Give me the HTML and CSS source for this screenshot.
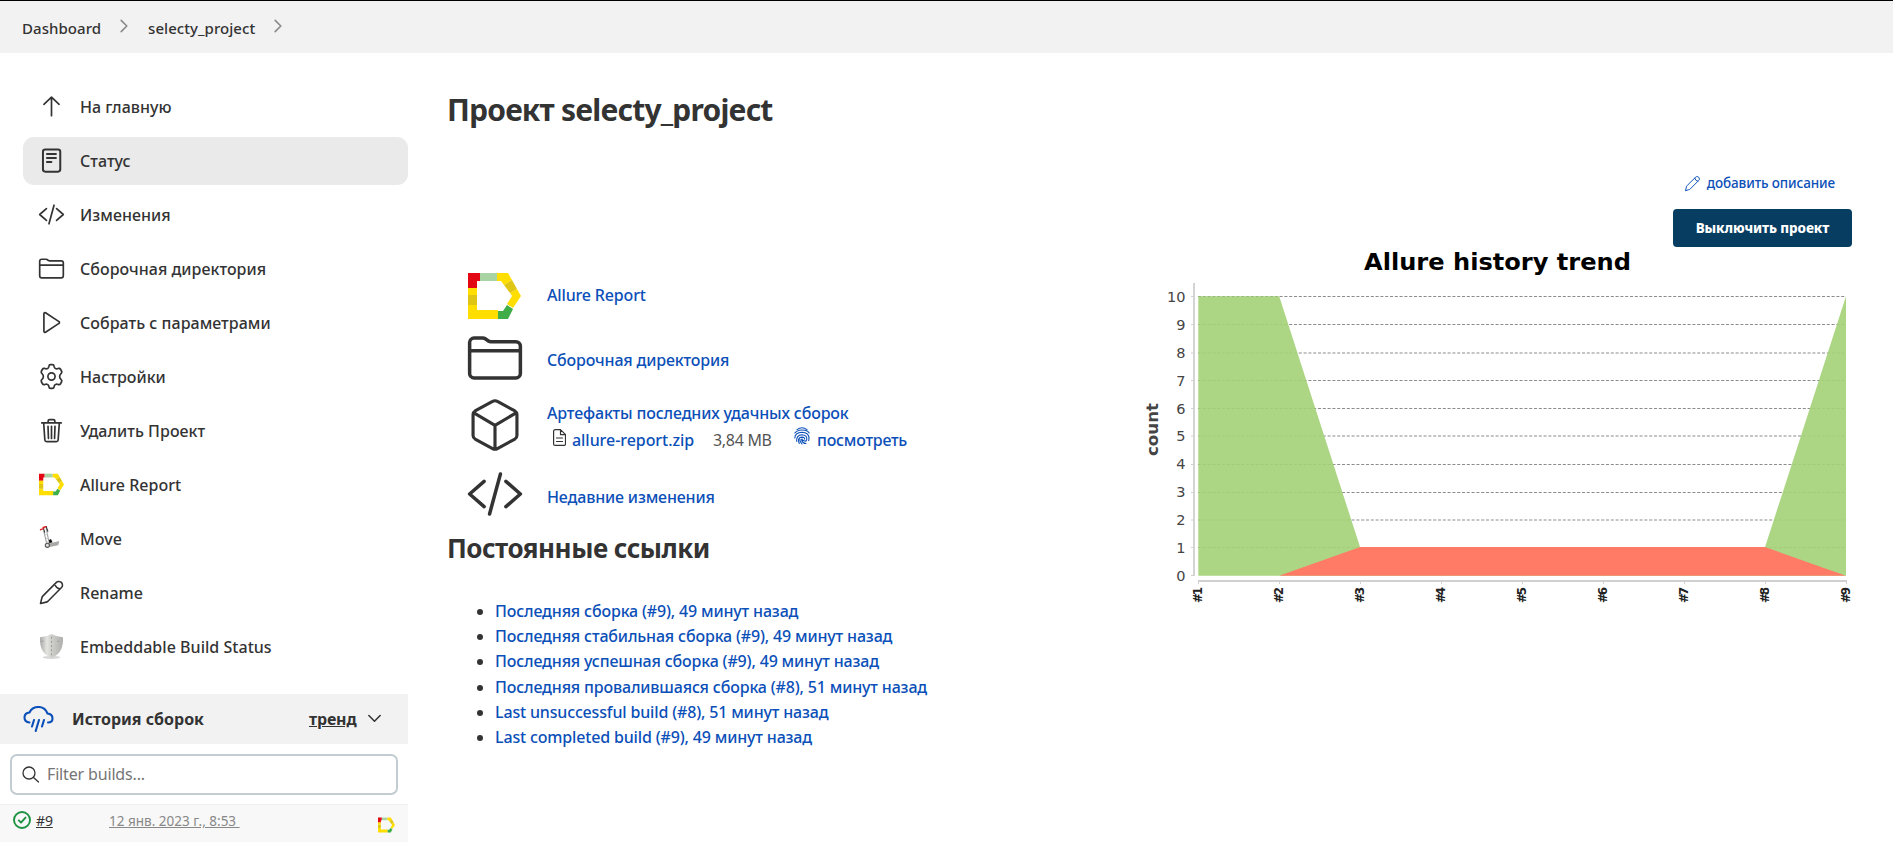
FILE: index.html
```html
<!DOCTYPE html>
<html lang="ru">
<head>
<meta charset="utf-8">
<title>selecty_project</title>
<link rel="stylesheet" href="styles.css">
</head>
<body>
<svg class="defs" width="0" height="0">
  <symbol id="up" viewBox="0 0 512 512"><path d="M112 214L256 80l144 134M256 92v338"/></symbol>
  <symbol id="doc" viewBox="0 0 512 512"><rect x="94" y="48" width="328" height="420" rx="44" stroke-width="38"/><path d="M170 134h170M170 208h170M170 284h84" stroke-width="38"/></symbol>
  <symbol id="code" viewBox="0 0 512 512"><path d="M160 368L32 256l128-112M352 368l128-112-128-112M304 80l-96 352"/></symbol>
  <symbol id="folder" viewBox="0 0 512 512"><path d="M440 432H72a40 40 0 01-40-40V120a40 40 0 0140-40h75.89a40 40 0 0122.19 6.72l27.84 18.56a40 40 0 0022.19 6.72H440a40 40 0 0140 40v240a40 40 0 01-40 40zM32 192h448"/></symbol>
  <symbol id="play" viewBox="0 0 512 512"><path d="M112 91v330c0 17 17 28 31 20l255-168c12-7 12-27 0-34L143 71c-14-8-31 3-31 20z"/></symbol>
  <symbol id="gear" viewBox="0 0 512 512"><circle cx="256" cy="256" r="68"/><path d="M207 60q4-28 30-28h38q26 0 30 28l5 20q5 17 22 25 17 9 34 4l24-7q25-5 37 17l21 37q11 22-7 40l-16 17q-14 14-14 43t14 43l16 17q18 18 7 40l-21 37q-12 22-37 17l-24-7q-17-5-34 4-17 8-22 25l-5 20q-4 28-30 28h-38q-26 0-30-28l-5-20q-5-17-22-25-17-9-34-4l-24 7q-25 5-37-17l-21-37q-11-22 7-40l16-17q14-14 14-43t-14-43l-16-17q-18-18-7-40l21-37q12-22 37-17l24 7q17 5 34-4 17-8 22-25z"/></symbol>
  <symbol id="trash" viewBox="0 0 512 512"><path d="M108 118l22 318q3 32 34 32h184q31 0 34-32l22-318M72 112h368M192 108V78q0-30 30-30h68q30 0 30 30v30M256 176v232M190 176l8 232M322 176l-8 232"/></symbol>
  <symbol id="pen" viewBox="0 0 512 512"><path transform="translate(18 18) scale(.93)" d="M32 480l28-116Q66 340 82 324L356 50q22-22 52-18 70 8 72 76 0 26-20 46L188 428q-16 18-40 24zM326 82q14 84 104 104"/></symbol>
  <symbol id="cube" viewBox="0 0 512 512"><path d="M472 360V152q0-22-20-34L280 24q-24-14-48 0L60 118q-20 12-20 34v208q0 22 20 34l172 94q24 14 48 0l172-94q20-12 20-34zM48 136l208 124 208-124M256 490V260"/></symbol>
  <symbol id="chev" viewBox="0 0 512 512"><path d="M184 112l144 144-144 144"/></symbol>
  <symbol id="allure" viewBox="0 0 53 46"><path fill="#e30613" d="M0 0h12v8H9v7H0z"/><path fill="#a8d3a3" d="M12 0h17v8H12z"/><path fill="#ffde00" d="M29 0h11l4 7-8 5-3-4h-4zM49 16l4 7-8 12-6-4 5-8-2-3zM0 15h9v7H0zM0 32h9v5h21v9H0z"/><path fill="#dfc514" d="M36 12l8-5 5 9-7 4zM0 22h9v10H0z"/><path fill="#3fae49" d="M30 38h5l4-6 6 4-5 10H30z"/></symbol>
</svg>

<header class="crumbs">
  <a class="crumb">Dashboard</a><svg class="sep"><use href="#chev"/></svg>
  <a class="crumb">selecty_project</a><svg class="sep"><use href="#chev"/></svg>
</header>

<div class="page">
  <aside class="side">
    <nav class="menu">
      <a class="item"><svg class="ico"><use href="#up"/></svg><span>На главную</span></a>
      <a class="item active"><svg class="ico"><use href="#doc"/></svg><span>Статус</span></a>
      <a class="item"><svg class="ico"><use href="#code"/></svg><span>Изменения</span></a>
      <a class="item"><svg class="ico"><use href="#folder"/></svg><span>Сборочная директория</span></a>
      <a class="item"><svg class="ico"><use href="#play"/></svg><span>Собрать с параметрами</span></a>
      <a class="item"><svg class="ico"><use href="#gear"/></svg><span>Настройки</span></a>
      <a class="item"><svg class="ico"><use href="#trash"/></svg><span>Удалить Проект</span></a>
      <a class="item"><svg class="ico plain"><use href="#allure"/></svg><span>Allure Report</span></a>
      <a class="item"><svg class="ico plain" viewBox="0 0 24 24"><g stroke-width="1"><path d="M7 2l2.800 15M4.500 4.500l3 13" stroke="#999"/><path d="M6 8.500l2.500-1M7 12l2.500-1M7.500 15.500l2.500-1" stroke="#ccc"/><path d="M1.500 3.500l3-1M4 1.500l3-1" stroke="#d22" stroke-width="1.400"/><path d="M7 1l1.500 4M4.500 3l1 3" stroke="#333"/><path d="M9 17l10.500-2.500-1 4L9 20.500z" fill="#a9a9a6"/><path d="M9.500 13.500l2-1 1.500 3-3 1z" fill="#111"/><circle cx="8" cy="18.500" r="2" fill="#ddd" stroke="#555"/></g></svg><span>Move</span></a>
      <a class="item"><svg class="ico"><use href="#pen"/></svg><span>Rename</span></a>
      <a class="item"><svg class="ico plain" viewBox="0 0 24 24"><defs><linearGradient id="sh"><stop stop-color="#a8a8a6"/><stop offset=".3" stop-color="#e4e5e1"/><stop offset=".5" stop-color="#cfcfcb"/><stop offset="1" stop-color="#aeaeab"/></linearGradient></defs><ellipse cx="12" cy="22.500" rx="8.500" ry="1.500" fill="#d8d8d8"/><path d="M12 0q5 3 11 3 1 15-11 20Q0 18 1 3 7 3 12 0z" fill="url(#sh)"/><path d="M12 3v17M3 7h3M18 7h3" stroke="#999" stroke-width="1" stroke-dasharray="1 3"/></svg><span>Embeddable Build Status</span></a>
    </nav>
    <div class="hist-head">
      <svg class="cloud" viewBox="0 0 30 26"><path d="M6 16.500Q1 16 1 11.500 1 7 6 6.500 8.500 1 15 1t9 6.500q5 .5 5 5 0 4-4.500 4"/><path d="M10.500 14l-2 6.500M15.500 14l-3.300 11M20.500 14l-2 6.500"/></svg>
      <b class="hist-title">История сборок</b>
      <a class="trend">тренд</a>
      <svg class="down" viewBox="0 0 12 8"><path d="M.8 1.200L6 6.600l5.200-5.400"/></svg>
    </div>
    <div class="search">
      <svg class="lens" viewBox="0 0 17 17"><circle cx="7" cy="7" r="6"/><path d="M11.500 11.500l5 4.500"/></svg>
      <span>Filter builds...</span>
    </div>
    <div class="build">
      <svg class="ok" viewBox="0 0 18 18"><circle cx="9" cy="9" r="8"/><path d="M5.800 9.400l2.200 2.200 4.500-5"/></svg>
      <a class="num">#9</a>
      <a class="date">12 янв. 2023 г., 8:53&nbsp;</a>
      <svg class="mini"><use href="#allure"/></svg>
    </div>
  </aside>

  <main class="main">
    <section class="info">
      <h1>Проект selecty_project</h1>
      <div class="rows">
        <div class="row r1"><svg class="big brand"><use href="#allure"/></svg><a class="t1">Allure Report</a></div>
        <div class="row r2"><svg class="big"><use href="#folder"/></svg><a class="t2">Сборочная директория</a></div>
        <div class="row r3"><svg class="big box"><use href="#cube"/></svg>
          <div class="arts">
            <a class="t3">Артефакты последних удачных сборок</a>
            <div class="file">
              <svg class="page-ico" viewBox="0 0 13 17"><path d="M2.500.6h5l5 5v9.300q0 1.500-1.500 1.500H2.100q-1.500 0-1.500-1.500V2.100Q.6.600 2.500.6zM7.500.6v5h5M3.500 9h6M3.500 12.500h6"/></svg>
              <a class="zip">allure-report.zip</a><span class="size">3,84 MB</span>
              <svg class="finger" viewBox="0 0 16 18"><path d="M3 2.600Q8-1 13 2.600M.8 6Q3 3.200 8 3t7.200 3M.8 11Q1 5.500 8 5.300q7 .2 7 6.200 0 1-.4 2M2.800 14.500Q2 8 8 7.700q5 .3 4.800 4.300-.2 3-2.800 1.800T8 12M5.300 16.500Q3 10.200 8 10.100q2.800.3 2.600 2M8 17Q5.500 14 6 12.300M12 16.500q-3.500 0-4.500-4"/></svg>
              <a class="look">посмотреть</a>
            </div>
          </div>
        </div>
        <div class="row r4"><svg class="big"><use href="#code"/></svg><a class="t4">Недавние изменения</a></div>
      </div>
      <h2>Постоянные ссылки</h2>
      <ul class="links">
        <li><a>Последняя сборка (#9), 49 минут назад</a></li>
        <li><a>Последняя стабильная сборка (#9), 49 минут назад</a></li>
        <li><a>Последняя успешная сборка (#9), 49 минут назад</a></li>
        <li><a>Последняя провалившаяся сборка (#8), 51 минут назад</a></li>
        <li><a>Last unsuccessful build (#8), 51 минут назад</a></li>
        <li><a>Last completed build (#9), 49 минут назад</a></li>
      </ul>
    </section>

    <section class="right">
      <a class="describe"><svg class="edit"><use href="#pen"/></svg><span>добавить описание</span></a>
      <button class="off">Выключить проект</button>
      <svg class="chart" viewBox="1140 247 720 363">
        <text class="title" x="1364" y="270" textLength="267" lengthAdjust="spacingAndGlyphs">Allure history trend</text>
        <g class="grid"><path d="M1198 296.500h648M1198 324.500h648M1198 353h648M1198 380.500h648M1198 408.500h648M1198 436h648M1198 464.500h648M1198 492.500h648M1198 520h648M1198 547.500h648"/></g>
        <path class="pass" d="M1198.300 296.300h80.900l81 251.200h404.700L1846 296.300v279.400H1198.300z"/>
        <path class="fail" d="M1279.200 575.700l81-28.700h404.700l81 28.700z"/>
        <g class="axis"><path d="M1194 283v293M1198 581h649" stroke-width="1.800"/><path d="M1191 296.500h3M1191 324.500h3M1191 353h3M1191 380.500h3M1191 408.500h3M1191 436h3M1191 464.500h3M1191 492.500h3M1191 520h3M1191 547.500h3M1191 575.500h3M1198.500 582v2M1279.500 582v2M1360.500 582v2M1441.500 582v2M1522.500 582v2M1603.500 582v2M1684.500 582v2M1765.500 582v2M1846.500 582v2"/></g>
        <g class="yl">
          <text x="1185.500" y="302">10</text><text x="1185.500" y="329.500">9</text><text x="1185.500" y="357.500">8</text><text x="1185.500" y="385.500">7</text><text x="1185.500" y="413.500">6</text><text x="1185.500" y="441">5</text><text x="1185.500" y="469">4</text><text x="1185.500" y="497">3</text><text x="1185.500" y="525">2</text><text x="1185.500" y="552.500">1</text><text x="1185.500" y="580.500">0</text>
        </g>
        <text class="count" transform="translate(1157.500 456) rotate(-90)" textLength="53" lengthAdjust="spacingAndGlyphs">count</text>
        <g class="xl">
          <text transform="translate(1202 603) rotate(-90)" textLength="16">#1</text>
          <text transform="translate(1283 603) rotate(-90)" textLength="16">#2</text>
          <text transform="translate(1364 603) rotate(-90)" textLength="16">#3</text>
          <text transform="translate(1445 603) rotate(-90)" textLength="16">#4</text>
          <text transform="translate(1526 603) rotate(-90)" textLength="16">#5</text>
          <text transform="translate(1607 603) rotate(-90)" textLength="16">#6</text>
          <text transform="translate(1688 603) rotate(-90)" textLength="16">#7</text>
          <text transform="translate(1769 603) rotate(-90)" textLength="16">#8</text>
          <text transform="translate(1850 603) rotate(-90)" textLength="16">#9</text>
        </g>
      </svg>
    </section>
  </main>
</div>
</body>
</html>
```

FILE: styles.css
```css
* { box-sizing: border-box; }
body { margin: 0; height: 842px; overflow: hidden; background: #fff; color: #333; font: 500 16px/24px "Noto Sans", sans-serif; letter-spacing: -0.16px; }
svg { display: block; flex: none; fill: none; stroke: currentColor; stroke-width: 32; stroke-linecap: round; stroke-linejoin: round; }
.defs { position: absolute; }
a { white-space: nowrap; }

.crumbs { height: 53px; border-top: 1px solid #000; background: #f2f2f2; display: flex; align-items: center; padding: 2px 0 0 22px; font-size: 15px; letter-spacing: 0.05px; }
.sep { width: 20px; height: 20px; margin: -4px 14px 0 13px; color: #888; stroke-width: 40; }

.page { display: flex; }
.side { width: 408px; height: 789px; flex: none; }
.menu { padding: 30px 0 0 23px; display: flex; flex-direction: column; gap: 6px; letter-spacing: 0.03px; }
.item { height: 48px; border-radius: 11px; display: flex; align-items: center; gap: 15px; padding: 0 0 1px 15px; }
.item span { padding-top: 1px; }
.active { background: #eaeaea; }
.ico { width: 27px; height: 27px; }
.plain, .mini, .brand { stroke: none; }
.plain { width: 25px; height: 25px; margin: 0 1px; }
.hist-head { margin-top: 23px; height: 50px; background: #f2f2f2; display: flex; align-items: center; padding: 0 0 1px 23px; }
.cloud { width: 31px; height: 26px; color: #0b4fb8; stroke-width: 2.1; }
.hist-title { margin-left: 18px; width: 237px; font-weight: 700; letter-spacing: 0; }
.trend { font-weight: 700; text-decoration: underline; width: 47px; }
.down { width: 13px; height: 9px; margin-left: 12px; stroke-width: 1.4; }
.search { margin: 10px 10px 9px; height: 41px; border: 2px solid #c3ccd1; border-radius: 7px; display: flex; align-items: center; gap: 8px; padding: 0 0 1px 10px; font-weight: 400; color: #757575; }
.lens { width: 17px; height: 17px; stroke: #333; stroke-width: 1.3; }
.build { height: 38px; background: #f8f8f8; border-top: 1px solid #efefef; display: flex; align-items: center; padding: 0 0 5px 13px; font-size: 14px; font-weight: 400; }
.build a { text-decoration: underline; }
.ok { width: 18px; height: 18px; color: #1e9142; stroke-width: 1.9; margin: -3px 5px 0 0; }
.num { width: 73px; }
.date { color: #888; font-size: 13.500px; padding-top: 0; width: 269px; letter-spacing: 0; }
.mini { width: 17px; height: 16px; margin-top: 7px; }

.main { flex: 1; display: flex; padding-left: 39px; }
.info { width: 693px; }
h1 { margin: 37px 0 0; font-size: 30px; line-height: 40px; font-weight: 700; letter-spacing: -0.8px; }
.rows { padding: 143px 0 0 20px; color: #0b4fb8; }
.row { display: flex; align-items: flex-start; }
.big { width: 58px; height: 58px; color: #333; margin: -1px 23px 0 -1px; stroke-width: 31; }
.r1 { height: 57px; }
.brand { width: 53px; height: 46px; margin: 0 26px 0 1px; }
.t1 { padding-top: 10px; }
.r2 { height: 70px; }
.t2 { padding-top: 18px; }
.r3 { height: 68px; }
.box { width: 54px; height: 52px; margin: -1px 25px 0 1px; }
.t3, .file { display: flex; }
.t3 { padding-top: 1px; }
.file { height: 27px; align-items: center; padding: 2px 0 0 6px; }
.page-ico { width: 13px; height: 17px; color: #333; stroke-width: 1.2; margin: -5px 6px 0 0; }
.zip { width: 141px; letter-spacing: -0.05px; }
.size { width: 81px; color: #555; font-weight: 400; letter-spacing: -0.3px; }
.finger { width: 16px; height: 18px; stroke-width: 1.1; margin: -7px 7px 0 0; }
.look { letter-spacing: -0.25px; }
.r4 .big { margin-top: -3px; }
.t4 { padding-top: 17px; }
h2 { margin: 7px 0 0; font-size: 26px; line-height: 36px; font-weight: 700; letter-spacing: -0.5px; }
.links { margin: 33px 0 0; padding-left: 48px; line-height: 25.200px; }
.links a { color: #0b4fb8; }

.right { width: 712px; display: flex; flex-direction: column; align-items: flex-end; }
.describe { margin: 120px 17px 0 0; height: 20px; display: flex; align-items: center; gap: 6px; color: #0b4fb8; font-size: 13.500px; letter-spacing: -0.12px; }
.edit { width: 17px; height: 17px; }
.off { margin: 16px 0 0; width: 179px; height: 38px; border: 0; border-radius: 4px; background: #063d61; color: #fff; font: 800 13.500px "Noto Sans", sans-serif; letter-spacing: -0.1px; white-space: nowrap; }
.chart { width: 720px; height: 363px; margin-right: -8px; font-family: "DejaVu Sans", sans-serif; stroke-width: 1; stroke-linecap: butt; }
.chart text { stroke: none; fill: #444; letter-spacing: 0; font-weight: 400; }
.chart .title { font-size: 23px; font-weight: 700; fill: #000; }
.grid { stroke: #8c8c8c; stroke-dasharray: 3 1.800; stroke-width: 1.2; }
.pass { fill: #a3d177; fill-opacity: .9; stroke: none; }
.fail { fill: #ff7b66; stroke: none; }
.axis { stroke: #d0d0d0; }
.chart .yl text { font-size: 14.500px; text-anchor: end; }
.chart .count { font-size: 16px; font-weight: 700; }
.chart .xl text { font-size: 12px; font-weight: 700; fill: #222; }
```
